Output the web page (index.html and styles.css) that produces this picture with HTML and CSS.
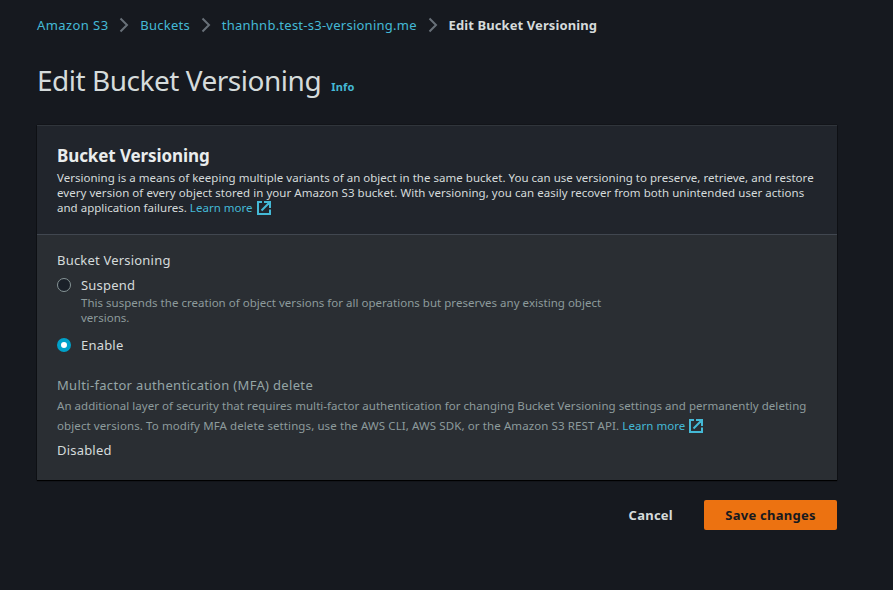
FILE: index.html
```html
<!DOCTYPE html>
<html lang="en">
<head>
<meta charset="utf-8">
<title>Edit Bucket Versioning</title>
<link rel="stylesheet" href="styles.css">
</head>
<body>
<main class="page">
  <nav class="crumbs">
    <a class="first">Amazon S3</a>
    <svg class="chevron" viewBox="0 0 10 16"><path d="M1.500 1.500 8 8l-6.500 6.500"/></svg>
    <a>Buckets</a>
    <svg class="chevron" viewBox="0 0 10 16"><path d="M1.500 1.500 8 8l-6.500 6.500"/></svg>
    <a>thanhnb.test-s3-versioning.me</a>
    <svg class="chevron" viewBox="0 0 10 16"><path d="M1.500 1.500 8 8l-6.500 6.500"/></svg>
    <strong>Edit Bucket Versioning</strong>
  </nav>
  <header class="title"><h1>Edit Bucket Versioning</h1><a class="info">Info</a></header>
  <section class="card">
    <div class="card-head">
      <h2>Bucket Versioning</h2>
      <p>Versioning is a means of keeping multiple variants of an object in the same bucket. You can use versioning to preserve, retrieve, and restore<br><span class="line-two">every version of every object stored in your Amazon S3 bucket. With versioning, you can easily recover from both unintended user actions</span><br>and application failures. <a>Learn more<svg class="ext" viewBox="0 0 14 14"><path d="M5 1H1v12h12V8.500M7 1h6v6M4.500 9.500 13 1"/></svg></a></p>
    </div>
    <div class="card-body">
      <div class="label">Bucket Versioning</div>
      <label class="option"><span class="radio"></span><span>Suspend</span></label>
      <p class="hint">This suspends the creation of object versions for all operations but preserves any existing object<br>versions.</p>
      <label class="option enabled"><span class="radio checked"></span><span>Enable</span></label>
      <div class="label mfa">Multi-factor authentication (MFA) delete</div>
      <p class="mfa-text">An additional layer of security that requires multi-factor authentication for changing Bucket Versioning settings and permanently deleting<br><span class="line-two">object versions. To modify MFA delete settings, use the AWS CLI, AWS SDK, or the Amazon S3 REST API. </span><a>Learn more<svg class="ext" viewBox="0 0 14 14"><path d="M5 1H1v12h12V8.500M7 1h6v6M4.500 9.500 13 1"/></svg></a></p>
      <div class="value">Disabled</div>
    </div>
  </section>
  <footer class="actions"><button class="cancel">Cancel</button><button class="save">Save changes</button></footer>
</main>
</body>
</html>
```
FILE: styles.css
```css
* { box-sizing: border-box; }
body { margin: 0; background: #16191f; color: #d5dbdb; font: 13px/20px "Noto Sans", sans-serif; letter-spacing: 0.2px; }
h1, h2, p { margin: 0; }
a { color: #44b9d6; }
.page { width: 837px; height: 590px; padding: 15px 0 0 37px; }
.crumbs { display: flex; align-items: center; height: 20px; white-space: nowrap; letter-spacing: 0.25px; }
.crumbs .first { letter-spacing: 0.42px; }
.crumbs strong { letter-spacing: 0.1px; }
.chevron { width: 10px; height: 16px; margin: 0 11px 0 10.800px; fill: none; stroke: #687078; stroke-width: 2; }
.title { display: flex; align-items: baseline; margin-top: 27px; height: 63px; }
h1 { font-size: 28px; line-height: 36px; font-weight: 400; letter-spacing: -0.48px; }
.info { margin-left: 10px; font-size: 11px; font-weight: 700; }
.card { height: 355px; background: #2a2e33; box-shadow: 0 1px 1px #000, 0 0 1px #000; }
.card-head { height: 110px; padding: 19px 20px 0; background: #21252c; border-top: 1px solid #30353b; border-bottom: 1px solid #414750; }
h2 { font-size: 17px; line-height: 22px; font-weight: 700; letter-spacing: -0.1px; color: #eaeded; }
p { font-size: 11.5px; line-height: 15px; white-space: nowrap; letter-spacing: 0.02px; }
.card-head p { margin-top: 3px; }
.card-head .line-two { letter-spacing: 0.04px; }
.ext { width: 14px; height: 14px; margin: -4px 0 -4px 4px; vertical-align: 1px; fill: none; stroke: #44b9d6; stroke-width: 2; }
.card-body { padding: 15px 20px 0; }
.option { display: flex; align-items: center; margin-top: 5px; }
.radio { width: 14px; height: 14px; margin-right: 10px; border: 1px solid #879596; border-radius: 50%; background: #1a2029; }
.radio.checked { border: 4px solid #00a1c9; background: #fff; }
.hint { margin-left: 24px; color: #8d9b9c; }
.option.enabled { margin-top: 10px; }
.mfa { margin-top: 20px; color: #95a5a6; letter-spacing: 0.33px; }
.mfa-text { line-height: 20px; color: #8d9b9c; margin-top: 1px; letter-spacing: 0.05px; }
.mfa-text .line-two { letter-spacing: 0.1px; }
.value { margin-top: 4px; }
.actions { display: flex; justify-content: flex-end; margin-top: 20px; }
button { height: 30px; padding: 0 21px; border: 0; border-radius: 2px; background: none; color: #d5dbdb; font: 700 13px/20px "Noto Sans", sans-serif; letter-spacing: 0.25px; }
.cancel { margin-right: 10px; }
.save { width: 133px; padding: 0; background: #ec7211; color: #16191f; }
```
